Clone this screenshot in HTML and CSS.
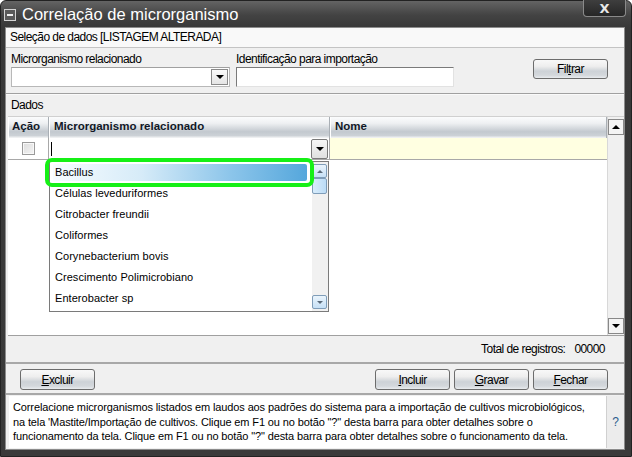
FILE: index.html
```html
<!DOCTYPE html>
<html lang="pt">
<head>
<meta charset="utf-8">
<title>Correlação de microrganismo</title>
<link rel="stylesheet" href="styles.css">
</head>
<body>
<div class="win">
  <div class="titlebar">
    <span class="sysicon"><span class="dash"></span></span>
    <span class="title">Correlação de microrganismo</span>
    <span class="close">X</span>
  </div>
  <div class="client">
    <div class="sechead">Seleção de dados [LISTAGEM ALTERADA]</div>
    <div class="filters">
      <div class="field f1">
        <div class="lbl">Microrganismo relacionado</div>
        <div class="combo"><span class="ddbtn"><span class="tri"></span></span></div>
      </div>
      <div class="field f2">
        <div class="lbl">Identificação para importação</div>
        <div class="input"></div>
      </div>
      <button class="btn filtrar">Fil<u>t</u>rar</button>
    </div>
    <div class="dados">Dados</div>
    <div class="grid">
      <div class="gmain">
        <div class="ghead">
          <div class="hc c1">Ação</div>
          <div class="hc c2">Microrganismo relacionado</div>
          <div class="hc c3">Nome</div>
        </div>
        <div class="grow">
          <div class="rc c1"><span class="chk"></span></div>
          <div class="rc c2"><span class="caret"></span><span class="ddbtn cell"><span class="tri"></span></span></div>
          <div class="rc c3 yellow"></div>
        </div>
      </div>
      <div class="vscroll">
        <span class="sbtn"><span class="tri up"></span></span>
        <span class="sbtn"><span class="tri"></span></span>
      </div>
      <div class="dropdown">
        <div class="items">
          <div class="item sel"><span class="hl">Bacillus</span></div>
          <div class="item">Células leveduriformes</div>
          <div class="item">Citrobacter freundii</div>
          <div class="item">Coliformes</div>
          <div class="item">Corynebacterium bovis</div>
          <div class="item">Crescimento Polimicrobiano</div>
          <div class="item">Enterobacter sp</div>
        </div>
        <div class="lscroll">
          <span class="lbtn"><span class="ltri up"></span></span>
          <span class="thumb"></span>
          <span class="spacer"></span>
          <span class="lbtn"><span class="ltri"></span></span>
        </div>
      </div>
      <div class="mark"></div>
    </div>
    <div class="total"><span>Total de registros:</span><span class="num">00000</span></div>
    <div class="buttons">
      <button class="btn"><u>E</u>xcluir</button>
      <span class="grow-space"></span>
      <button class="btn"><u>I</u>ncluir</button>
      <button class="btn"><u>G</u>ravar</button>
      <button class="btn"><u>F</u>echar</button>
    </div>
    <div class="help">
      <div class="htext">Correlacione microrganismos listados em laudos aos padrões do sistema para a importação de cultivos microbiológicos,<br>na tela 'Mastite/Importação de cultivos. Clique em F1 ou no botão "?" desta barra para obter detalhes sobre o<br>funcionamento da tela. Clique em F1 ou no botão "?" desta barra para obter detalhes sobre o funcionamento da tela.</div>
      <div class="q">?</div>
    </div>
  </div>
</div>
</body>
</html>
```

FILE: styles.css
```css
* { box-sizing: border-box; }
html, body { margin: 0; padding: 0; }
body {
  width: 632px; height: 457px; overflow: hidden; background: #ffffff;
  font-family: "Liberation Sans", Arial, sans-serif; font-size: 11px; color: #000;
}
.win {
  width: 632px; height: 457px;
  background: linear-gradient(#646464 0px, #434343 14px, #383838 27px, #3a3a3a 100%);
  border-radius: 6px 6px 0 0;
  display: flex; flex-direction: column;
  border: 1px solid #222;
}
.titlebar {
  height: 26px; display: flex; align-items: center; padding-left: 3px; position: relative;
}
.sysicon {
  width: 12px; height: 12px; border: 1px solid #d4d4d4; background: #5a5a5a;
  display: flex; align-items: center; justify-content: center; margin-top: 1px;
}
.dash { width: 6px; height: 2px; background: #f0f0f0; }
.title {
  color: #fff; font-family: "Liberation Sans", sans-serif;
  font-size: 16.5px; margin-left: 6px; margin-top: 1px;
}
.close {
  position: absolute; right: 5px; top: -1px; width: 43px; height: 17px;
  background: linear-gradient(#3e3e3e, #262626); border: 1px solid #8a8a8a; border-top: none;
  border-radius: 0 0 4px 4px; color: #e8e8e8; font-weight: bold; font-size: 13px;
  display: flex; align-items: center; justify-content: center; font-family: "DejaVu Sans", sans-serif;
}
.client {
  flex: 1; margin: 0 6px 6px 4px; background: #f0f0f0;
  display: flex; flex-direction: column;
  border: 1px solid #8c8c8c;
}
.sechead, .lbl, .dados, .total, .btn {
  font-family: "Liberation Sans", sans-serif; font-size: 12px; letter-spacing: -0.55px;
}
.sechead {
  height: 20px; line-height: 19px; background: #f9f9f9; padding-left: 4px;
  border-bottom: 1px solid #c4c4c4;
}
.filters {
  height: 46px; display: flex; align-items: flex-start; padding: 4px 0 0 5px;
  border-bottom: 1px solid #a0a0a0;
}
.field { display: flex; flex-direction: column; }
.f1 { width: 219px; }
.f2 { width: 218px; margin-left: 6px; }
.lbl { height: 15px; line-height: 14px; }
.combo {
  height: 20px; background: #fff; border: 1px solid #b8b8b8; border-top-color: #a0a0a0;
  display: flex; justify-content: flex-end; align-items: center; padding-right: 1px;
}
.ddbtn {
  width: 17px; height: 16px; border: 1px solid #8a8a8a; background: linear-gradient(#fafafa, #e4e4e4);
  display: flex; align-items: center; justify-content: center;
}
.tri {
  width: 0; height: 0; border-left: 4px solid transparent; border-right: 4px solid transparent;
  border-top: 4px solid #000;
}
.tri.up { border-top: none; border-bottom: 4px solid #000; }
.input {
  height: 20px; background: #fff; border: 1px solid #e2e2e2; border-top-color: #7a7a7a; border-left-color: #7a7a7a;
}
.btn {
  width: 75px; height: 21px; border: 1px solid #6c6c6c; border-radius: 3px; padding: 0;
  background: linear-gradient(#f8f8f8 0%, #eeeeee 35%, #cdd2d7 62%, #d4d8dc 85%, #e9ecef 100%);
  color: #000; line-height: 18px; text-align: center;
}
.filtrar { margin-left: auto; margin-right: 16px; margin-top: 7px; height: 20px; }
.dados { height: 22px; line-height: 20px; padding-left: 5px; border-top: 1px solid #fafafa; }
.grid {
  position: relative; margin-left: 2px; height: 220px; display: flex; background: #fff;
  border-top: 1px solid #d0d0d0; border-bottom: 1px solid #a0a0a0;
}
.gmain { width: 599px; display: flex; flex-direction: column; }
.ghead { height: 21px; display: flex; }
.hc {
  height: 21px; font-weight: bold; font-size: 11.5px; color: #111827; line-height: 19px; padding-left: 3px;
  background: linear-gradient(#fbfcfd 0%, #eef0f2 30%, #c3c9cf 70%, #ccd1d6 88%, #f6f7f8 100%);
  border-left: 1px solid #ffffff; border-right: 1px solid #a9afb5;
}
.c1 { width: 41px; }
.c2 { width: 281px; }
.c3 { width: 277px; }
.hc.c2, .hc.c3 { padding-left: 4px; }
.grow { height: 22px; display: flex; border-bottom: 1px solid #a8a8a8; }
.rc { height: 21px; }
.rc.c1 { display: flex; align-items: center; justify-content: center; border-right: 1px solid #a8a8a8; }
.chk {
  width: 13px; height: 13px; border: 1px solid #9a9a9a; background: linear-gradient(135deg, #dcdcdc, #f4f4f4);
  box-shadow: inset 0 0 0 1px #f8f8f8;
}
.rc.c2 { display: flex; align-items: center; justify-content: space-between; padding: 0 1px 0 2px; border-right: 1px solid #a8a8a8; }
.caret { width: 1px; height: 14px; background: #000; }
.ddbtn.cell { width: 17px; height: 20px; border-radius: 2px; border-color: #7a7a7a; background: linear-gradient(#f6f6f6, #e0e0e0); }
.yellow { background: #ffffe1; }
.vscroll {
  width: 19px; background: #f0f0f0; display: flex; flex-direction: column; justify-content: space-between;
  align-items: center; padding: 2px 0 1px 0; border-left: 1px solid #d8d8d8;
}
.sbtn {
  width: 16px; height: 16px; border: 1px solid #888; background: #f4f4f4;
  display: flex; align-items: center; justify-content: center;
}
.dropdown {
  position: absolute; left: 41px; top: 44px; width: 280px; height: 151px;
  border: 1px solid #7a7a7a; background: #fff; display: flex;
}
.items { flex: 1; display: flex; flex-direction: column; }
.item { height: 21px; line-height: 21px; padding-left: 5px; font-size: 11px; letter-spacing: 0.05px; }
.item.sel { padding: 2px 5px 0 3px; }
.hl {
  display: block; height: 17px; line-height: 17px; padding-left: 2px;
  background: linear-gradient(90deg, #f7fcff 0%, #d6ebf8 35%, #8cc5ea 70%, #55a7dc 100%);
  border-radius: 2px;
}
.lscroll {
  width: 16px; background: #f1f1f1; display: flex; flex-direction: column; padding: 2px 0 2px 0; margin-right: 0;
}
.lbtn {
  width: 15px; height: 14px; border: 1px solid #7f9db9; border-radius: 2px;
  background: linear-gradient(#eaf4fc, #c6e0f6); display: flex; align-items: center; justify-content: center;
}
.ltri {
  width: 0; height: 0; border-left: 3px solid transparent; border-right: 3px solid transparent;
  border-top: 3px solid #5a6a7a;
}
.ltri.up { border-top: none; border-bottom: 3px solid #5a6a7a; }
.thumb {
  width: 15px; height: 16px; border: 1px solid #7f9db9; border-radius: 2px;
  background: linear-gradient(90deg, #d8ecfb, #bcdcf6);
}
.spacer { flex: 1; }
.mark {
  position: absolute; left: 37px; top: 41px; width: 269px; height: 29px;
  border: 4px solid #16f016; border-radius: 7px;
}
.total {
  height: 28px; display: flex; justify-content: flex-end; align-items: center; padding-right: 19px; gap: 9px;
  border-bottom: 2px solid #a8a8a8;
}
.buttons { height: 31px; display: flex; align-items: flex-start; padding: 5px 16px 0 14px; gap: 4px; border-bottom: 2px solid #a8a8a8; }
.grow-space { flex: 1; }
.help { flex: 1; display: flex; padding: 1px 0 1px 3px; }
.htext {
  flex: 1; background: #fff; padding: 4px 4px; line-height: 14.5px; font-size: 11px; letter-spacing: -0.12px;
  white-space: nowrap;
}
.q {
  width: 18px; background: #ececec; color: #2b5c8c; display: flex; align-items: center; justify-content: center; font-size: 12px;
  border-left: 1px solid #d0d0d0;
}
```
